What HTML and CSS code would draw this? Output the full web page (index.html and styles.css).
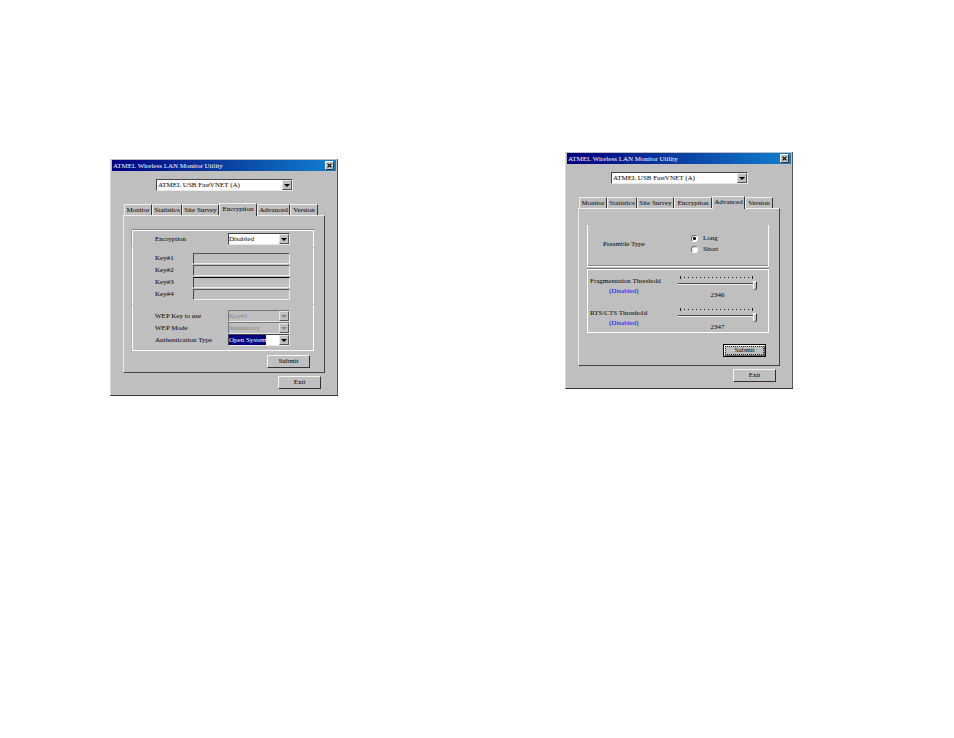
FILE: index.html
```html
<!DOCTYPE html>
<html lang="en">
<head>
<meta charset="utf-8">
<title>ATMEL Wireless LAN Monitor Utility</title>
<link rel="stylesheet" href="styles.css">
</head>
<body>
<main class="sheet">
  <section class="dialog dialog-low">
    <header class="titlebar">
      <h1>ATMEL Wireless LAN Monitor Utility</h1>
      <button class="close" type="button" aria-label="Close"><svg viewBox="0 0 9 9"><path d="M2 2L7 7M7 2L2 7"/></svg></button>
    </header>
    <div class="combo device">
      <select aria-label="Device"><option>ATMEL USB FastVNET (A)</option></select>
      <span class="arrow"></span>
    </div>
    <nav class="tabs">
      <button type="button">Monitor</button>
      <button type="button">Statistics</button>
      <button type="button">Site Survey</button>
      <button type="button" class="active">Encryption</button>
      <button type="button">Advanced</button>
      <button type="button">Version</button>
    </nav>
    <div class="panel">
      <div class="group group-mode">
        <label for="enc">Encryption</label>
        <div class="combo"><select id="enc"><option>Disabled</option></select><span class="arrow"></span></div>
      </div>
      <div class="group group-keys">
        <label for="k1">Key#1</label><input id="k1" type="text" disabled>
        <label for="k2">Key#2</label><input id="k2" type="text" disabled>
        <label for="k3">Key#3</label><input id="k3" type="text" class="strong" disabled>
        <label for="k4">Key#4</label><input id="k4" type="text" disabled>
      </div>
      <div class="group group-wep">
        <label for="use">WEP Key to use</label>
        <div class="combo off"><select id="use" disabled><option>Key#1</option></select><span class="arrow"></span></div>
        <label for="mode">WEP Mode</label>
        <div class="combo off"><select id="mode" disabled><option>Mandatory</option></select><span class="arrow"></span></div>
        <label for="auth">Authentication Type</label>
        <div class="combo picked"><select id="auth"><option>Open System</option></select><span class="arrow"></span></div>
      </div>
      <button class="push submit" type="button">Submit</button>
    </div>
    <button class="push exit" type="button">Exit</button>
  </section>

  <section class="dialog">
    <header class="titlebar">
      <h1>ATMEL Wireless LAN Monitor Utility</h1>
      <button class="close" type="button" aria-label="Close"><svg viewBox="0 0 9 9"><path d="M2 2L7 7M7 2L2 7"/></svg></button>
    </header>
    <div class="combo device">
      <select aria-label="Device"><option>ATMEL USB FastVNET (A)</option></select>
      <span class="arrow"></span>
    </div>
    <nav class="tabs">
      <button type="button">Monitor</button>
      <button type="button">Statistics</button>
      <button type="button">Site Survey</button>
      <button type="button">Encryption</button>
      <button type="button" class="active">Advanced</button>
      <button type="button">Version</button>
    </nav>
    <div class="panel">
      <div class="group group-preamble" role="radiogroup" aria-labelledby="pre">
        <span id="pre">Preamble Type</span>
        <div class="radios">
          <label><input type="radio" name="pre" checked>Long</label>
          <label><input type="radio" name="pre">Short</label>
        </div>
      </div>
      <div class="group group-limits">
        <div class="limit">
          <label for="frag">Fragmentation Threshold <span>(Disabled)</span></label>
          <div class="slider">
            <svg class="ticks" viewBox="0 0 76 4"><path d="M2.500 0V3M74.500 0V3"/><path class="dots" d="M6 1.500H74"/></svg>
            <input id="frag" type="range" min="256" max="2346" value="2346">
            <output for="frag">2346</output>
          </div>
        </div>
        <div class="limit">
          <label for="rts">RTS/CTS Threshold <span>(Disabled)</span></label>
          <div class="slider">
            <svg class="ticks" viewBox="0 0 76 4"><path d="M2.500 0V3M74.500 0V3"/><path class="dots" d="M6 1.500H74"/></svg>
            <input id="rts" type="range" min="0" max="2347" value="2347">
            <output for="rts">2347</output>
          </div>
        </div>
      </div>
      <button class="push submit focused" type="button">Submit</button>
    </div>
    <button class="push exit" type="button">Exit</button>
  </section>
</main>
</body>
</html>
```
FILE: styles.css
```css
* { box-sizing: border-box; }

body {
  margin: 0;
  background: #fff;
  color: #000;
  font: 7px/10px "Liberation Serif", serif;
}

button, input, select { font: inherit; color: inherit; margin: 0; padding: 0; border-radius: 0; }

.sheet {
  display: flex;
  justify-content: space-between;
  align-items: flex-start;
  padding: 152px 161px 40px 110px;
}

.dialog {
  display: flex;
  flex-direction: column;
  flex: 0 1 228px;
  padding: 1px 1px 6px;
  background: #bfbfbf;
  border-bottom: 1px solid #333;
  border-right: 1px solid #555;
  border-left: 1px solid #dcdcdc;
}
.dialog-low { margin-top: 7px; }

.titlebar {
  display: flex;
  align-items: center;
  justify-content: space-between;
  height: 11px;
  padding: 0 2px 0 1px;
  background: linear-gradient(90deg, #000080, #0a3fa0 50%, #1080d0);
}
.titlebar h1 { margin: 0; font-size: 7px; font-weight: 400; color: #fff; white-space: nowrap; }

.close {
  width: 9px;
  height: 9px;
  background: #c4c4c4;
  border: 1px solid;
  border-color: #fff #333 #333 #fff;
}
.close svg { display: block; width: 7px; height: 7px; fill: none; stroke: #000; stroke-width: 1.5; }

.combo {
  display: flex;
  height: 12px;
  background: #fff;
  border: 1px solid;
  border-color: #444 #e8e8e8 #e8e8e8 #444;
}
.combo select {
  flex: 1;
  min-width: 0;
  height: 10px;
  border: 0;
  background: none;
  appearance: none;
  opacity: 1;
}
.arrow {
  display: grid;
  place-items: center;
  width: 10px;
  background: #bfbfbf;
  border: 1px solid;
  border-color: #e8e8e8 #555 #555 #e8e8e8;
  pointer-events: none;
}
.arrow::before {
  content: "";
  border: solid transparent;
  border-width: 3px 3px 0;
  border-top-color: #000;
}
.off { background: #bfbfbf; border-color: #777 #e8e8e8 #e8e8e8 #777; color: #858585; }
.off .arrow::before { border-top-color: #858585; }
.picked select { flex: 0 1 37px; background: #000080; color: #fff; }
.picked .arrow { margin-left: auto; }

.device { width: 137px; margin: 8px 0 12px 44px; }
.device select { padding-left: 1px; }

.tabs {
  display: grid;
  grid-template-columns: 28px 30px 37px 38px 33px 28px;
  align-items: end;
  height: 12px;
  margin-left: 12px;
}
.tabs button {
  height: 11px;
  background: #bfbfbf;
  border: solid;
  border-width: 1px 1px 0;
  border-color: #eee #333 #333 #eee;
  border-radius: 1px 1px 0 0;
  line-height: 9px;
  white-space: nowrap;
}
.tabs .active { height: 13px; margin-bottom: -1px; z-index: 1; padding-bottom: 2px; }

.panel {
  display: flex;
  flex-direction: column;
  height: 158px;
  margin: 0 11px 3px;
  padding: 14px 10px 4px 8px;
  border: 1px solid;
  border-color: #eee #444 #444 #eee;
}

.group {
  display: grid;
  align-items: center;
  padding-left: 22px;
  border: solid #fff;
  border-width: 0 1px;
  box-shadow: -1px 0 #b0b0b0;
}
.group-mode, .group-wep { grid-template-columns: 73px 62px; }
.group-mode {
  height: 17px;
  border-top: 1px solid #fff;
  box-shadow: 0 -1px #858585, -1px 0 #999;
}
.group-keys {
  grid-template-columns: 38px 97px;
  grid-auto-rows: 12px;
  margin-top: 1px;
  height: 56px;
  align-content: center;
}
.group-keys input {
  height: 11px;
  min-width: 0;
  background: #bfbfbf;
  border: 1px solid;
  border-color: #555 #eee #eee #444;
}
.group-keys .strong { border-top-color: #000; }
.group-wep {
  grid-auto-rows: 12px;
  align-content: end;
  height: 46px;
  margin-top: 1px;
  padding-bottom: 4px;
  border-bottom: 1px solid #fff;
}
.group label { white-space: nowrap; }

.push {
  height: 13px;
  width: 43px;
  flex: none;
  background: #c0c0c0;
  border: 1px solid;
  border-color: #f4f4f4 #333 #333 #f4f4f4;
  line-height: 9px;
}
.submit { align-self: flex-end; margin: auto 4px 0 0; }
.focused {
  margin: auto 3px 4px 0;
  border-color: #000;
  box-shadow: inset 1px 1px #fff, inset -1px -1px #666;
  outline: 1px dotted #222;
  outline-offset: -3px;
}
.exit { align-self: flex-end; margin-right: 15px; }

.group-preamble {
  grid-template-columns: 88px 1fr;
  height: 42px;
  margin-top: 2px;
  padding: 0 0 4px 15px;
  border-bottom: 1px solid #fff;
  box-shadow: 0 -1px #bfbfbf, inset 0 -1px #888;
}
.radios { display: grid; gap: 1px; }
.radios label { display: flex; align-items: center; gap: 5px; }
.radios input {
  appearance: none;
  width: 7px;
  height: 7px;
  border: 1px solid;
  border-color: #666 #fff #fff #666;
  border-radius: 50%;
  background: #fff;
}
.radios input:checked { background: radial-gradient(circle, #000 1px, #fff 2px); }

.group-limits {
  height: 64px;
  margin-top: 2px;
  padding: 6px 0 0 2px;
  align-content: start;
  border-width: 1px;
  box-shadow: 0 -1px #777;
}
.limit { display: grid; grid-template-columns: 88px 79px; height: 32px; }
.limit label span { display: block; padding-left: 19px; color: #00f; }
.slider { display: grid; grid-template-rows: 4px 8px 10px; }
.ticks { display: block; width: 76px; height: 4px; fill: none; stroke: #222; }
.ticks .dots { stroke-dasharray: 1 3; }
.slider input {
  appearance: none;
  width: 100%;
  height: 10px;
  min-width: 0;
  background: linear-gradient(#444, #444) 0 3px / 75px 1px no-repeat,
              linear-gradient(#eee, #eee) 0 4px / 75px 1px no-repeat;
}
.slider input::-webkit-slider-thumb {
  appearance: none;
  width: 4px;
  height: 9px;
  background: #c8c8c8;
  border: 1px solid;
  border-color: #fff #333 #555 #fff;
  border-radius: 0 1px 2px 2px;
}
.slider output { justify-self: center; padding-top: 2px; }
```
